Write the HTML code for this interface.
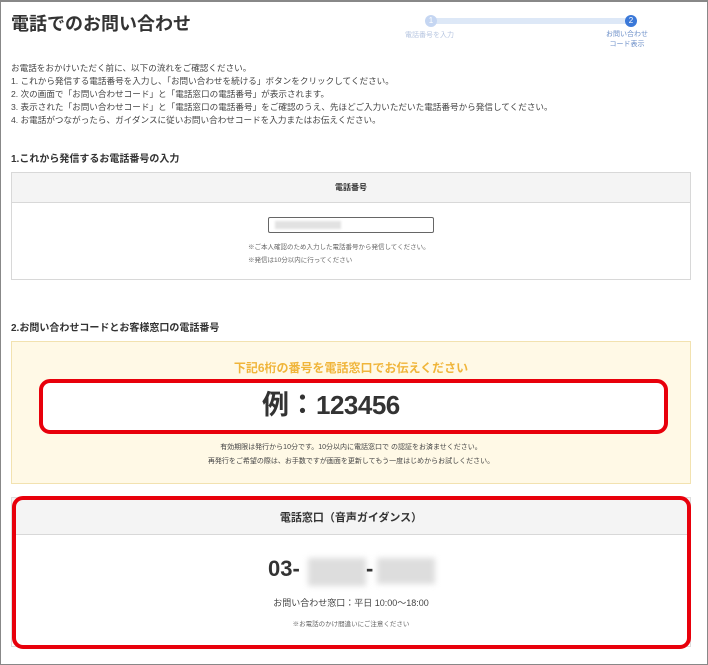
<!DOCTYPE html>
<html><head><meta charset="utf-8"><style>
*{margin:0;padding:0;box-sizing:border-box}
body{width:708px;height:665px;background:#fff;font-family:"Liberation Sans","Noto Sans CJK JP",sans-serif;color:#333;position:relative;overflow:hidden}
.frame{position:absolute;left:0;top:0;width:708px;height:665px;border:1px solid #888;border-top:2px solid #888}
.a{position:absolute;white-space:nowrap}
</style></head><body>
<div class="frame"></div>
<div class="a" style="left:11px;top:10px;font-size:18px;font-weight:bold;color:#333">電話でのお問い合わせ</div>
<div class="a" style="left:431px;top:18px;width:200px;height:6px;background:#dde8f7"></div>
<div class="a" style="left:425px;top:15px;width:12px;height:12px;border-radius:50%;background:#c5d6f2;color:#fff;font-size:8px;text-align:center;line-height:12px">1</div>
<div class="a" style="left:625px;top:15px;width:12px;height:12px;border-radius:50%;background:#3a78d8;color:#fff;font-size:8px;text-align:center;line-height:12px">2</div>
<div class="a" style="left:405px;top:30px;font-size:7px;color:#b7c6e0">電話番号を入力</div>
<div class="a" style="left:606px;top:30px;font-size:7px;color:#6c8fc8;text-align:center;line-height:10px">お問い合わせ<br>コード表示</div>
<div class="a" style="left:11px;top:62px;font-size:8.6px;line-height:13px;color:#444">お電話をおかけいただく前に、以下の流れをご確認ください。<br>1. これから発信する電話番号を入力し、「お問い合わせを続ける」ボタンをクリックしてください。<br>2. 次の画面で「お問い合わせコード」と「電話窓口の電話番号」が表示されます。<br>3. 表示された「お問い合わせコード」と「電話窓口の電話番号」をご確認のうえ、先ほどご入力いただいた電話番号から発信してください。<br>4. お電話がつながったら、ガイダンスに従いお問い合わせコードを入力またはお伝えください。</div>
<div class="a" style="left:11px;top:150px;font-size:10px;font-weight:bold;color:#333">1.これから発信するお電話番号の入力</div>
<div class="a" style="left:11px;top:172px;width:680px;height:108px;border:1px solid #d8d8d8">
 <div style="height:30px;background:#f4f4f4;border-bottom:1px solid #d8d8d8;text-align:center;font-size:8px;font-weight:bold;line-height:30px">電話番号</div>
</div>
<div class="a" style="left:268px;top:217px;width:166px;height:16px;border:1px solid #666;border-radius:2px;background:#fff"><div style="margin:3px 0 0 6px;width:66px;height:8px;background:#e2e2e2;filter:blur(1px)"></div></div>
<div class="a" style="left:248px;top:241px;font-size:6.5px;color:#666;line-height:13px">※ご本人確認のため入力した電話番号から発信してください。<br>※発信は10分以内に行ってください</div>
<div class="a" style="left:11px;top:319px;font-size:10px;font-weight:bold;color:#333">2.お問い合わせコードとお客様窓口の電話番号</div>
<div class="a" style="left:11px;top:341px;width:680px;height:143px;background:#fff9e6;border:1px solid #f2e2b0"></div>
<div class="a" style="left:11px;top:359px;width:680px;text-align:center;font-size:12px;font-weight:bold;color:#f0b53a">下記6桁の番号を電話窓口でお伝えください</div>
<div class="a" style="left:39px;top:379px;width:629px;height:55px;background:#fff;border:4px solid #e8000b;border-radius:11px"></div>
<div class="a" style="left:262px;top:389px;font-size:27px;font-weight:bold;color:#333;line-height:32px">例：<span style="font-size:26px;letter-spacing:-0.5px">123456</span></div>
<div class="a" style="left:11px;top:441px;width:680px;text-align:center;font-size:7px;color:#444;line-height:14px">有効期限は発行から10分です。10分以内に電話窓口で の認証をお済ませください。<br>再発行をご希望の際は、お手数ですが画面を更新してもう一度はじめからお試しください。</div>
<div class="a" style="left:11px;top:497px;width:680px;height:150px;border:1px solid #ddd;background:#fff;overflow:hidden">
 <div style="height:37px;background:#f4f4f4;border-bottom:1px solid #d8d8d8"></div>
</div>
<div class="a" style="left:12px;top:496px;width:679px;height:153px;border:4px solid #e8000b;border-radius:11px"></div>
<div class="a" style="left:11px;top:509px;width:680px;text-align:center;font-size:11px;font-weight:bold;color:#333">電話窓口（音声ガイダンス）</div>
<div class="a" style="left:268px;top:556px;font-size:22px;font-weight:bold;color:#333">03-</div>
<div class="a" style="left:308px;top:558px;width:58px;height:28px;background:#ddd;filter:blur(3px)"></div>
<div class="a" style="left:366px;top:556px;font-size:22px;font-weight:bold;color:#333">-</div>
<div class="a" style="left:377px;top:558px;width:58px;height:26px;background:#ddd;filter:blur(3px)"></div>
<div class="a" style="left:11px;top:596px;width:680px;text-align:center;font-size:9px;color:#444">お問い合わせ窓口：平日 10:00～18:00</div>
<div class="a" style="left:11px;top:618px;width:680px;text-align:center;font-size:6.5px;color:#666">※お電話のかけ間違いにご注意ください</div>
</body></html>
